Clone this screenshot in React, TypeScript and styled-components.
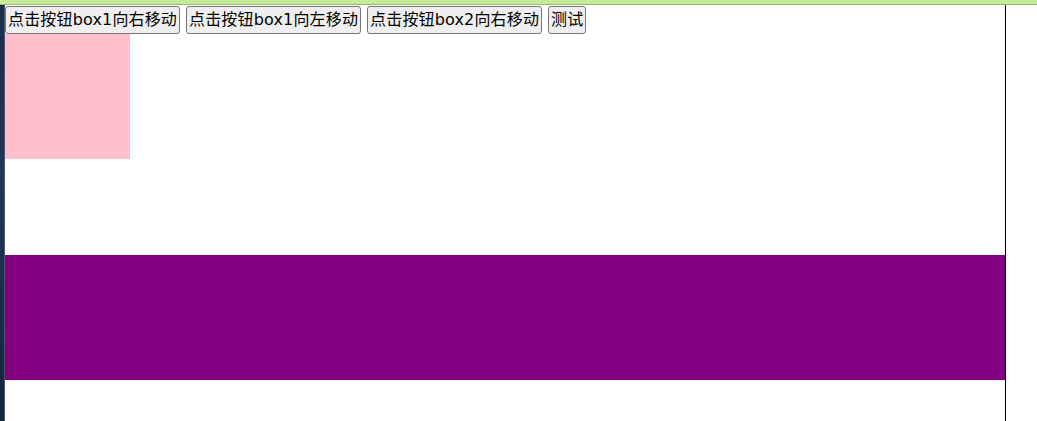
import React from "react";
import styled, { createGlobalStyle } from "styled-components";

const Global = createGlobalStyle`
  html, body { margin: 0; padding: 0; background: #ffffff; }
  body { font-family: "Noto Sans CJK SC", "Liberation Sans", sans-serif; overflow: hidden; }
`;

const Frame = styled.div`
  display: grid;
  grid-template-rows: 5px 1fr;
  height: 421px;
  width: 1037px;
`;

const TopBar = styled.div`
  background: #c8e89c;
  border-bottom: 1px solid #93b86c;
`;

const Body = styled.div`
  display: flex;
  min-height: 0;
`;

const SideStrip = styled.div`
  width: 4px;
  background: linear-gradient(180deg, #1b2d4d 0%, #22365a 40%, #15243f 100%);
  border-right: 1px solid #4c5668;
`;

const Main = styled.main`
  width: 1000px;
  border-right: 1px solid #000;
  display: flex;
  flex-direction: column;
`;

const Toolbar = styled.div`
  display: flex;
  gap: 6px;
  padding-top: 1px;
  height: 29px;
  box-sizing: border-box;
`;

const Button = styled.button`
  height: 28px;
  box-sizing: border-box;
  padding: 0 2px;
  margin: 0;
  font-family: "DejaVu Sans", "Noto Sans CJK SC", sans-serif;
  font-size: 16px;
  line-height: 1;
  letter-spacing: 0.16px;
  color: #000;
  background: #efefef;
  border: 1px solid #767676;
  border-radius: 3px;
  white-space: nowrap;
`;

const Box = styled.div<{ $color: string; $w: string }>`
  width: ${(p) => p.$w};
  height: 125px;
  background: ${(p) => p.$color};
  flex-shrink: 0;
`;

const Spacer = styled.div`
  height: 96px;
  flex-shrink: 0;
`;

export default function App() {
  return (
    <>
      <Global />
      <Frame>
        <TopBar />
        <Body>
          <SideStrip />
          <Main>
            <Toolbar>
              <Button>点击按钮box1向右移动</Button>
              <Button>点击按钮box1向左移动</Button>
              <Button>点击按钮box2向右移动</Button>
              <Button>测试</Button>
            </Toolbar>
            <Box $color="#ffc0cb" $w="125px" />
            <Spacer />
            <Box $color="#800080" $w="1000px" />
          </Main>
        </Body>
      </Frame>
    </>
  );
}
